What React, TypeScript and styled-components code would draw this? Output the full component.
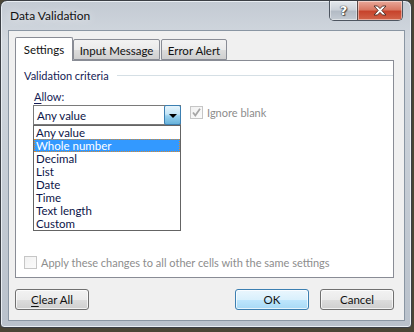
import styled, { createGlobalStyle } from "styled-components"

const GlobalStyle = createGlobalStyle`
    html, body {
        margin: 0;
        padding: 0;
        background: #4a4536;
    }
    * {
        box-sizing: border-box;
    }
`

const Window = styled.div`
    width: 412px;
    height: 328px;
    display: flex;
    flex-direction: column;
    border: 1px solid #3b3f45;
    border-radius: 7px 7px 4px 4px;
    background: linear-gradient(180deg, #c3cad3 0%, #d2d8df 12%, #c9d0d8 40%, #b9c1cb 100%);
    box-shadow: inset 0 0 0 1px #e8edf2;
    font-family: "Segoe UI", Lato, "Open Sans", sans-serif;
    font-size: 11px;
    color: #1a1a1a;
    overflow: hidden;
`

const TitleBar = styled.div`
    height: 29px;
    display: flex;
    align-items: flex-start;
    padding-left: 9px;
`

const Title = styled.span`
    margin-top: 7px;
    font-size: 12px;
    color: #111;
    text-shadow: 0 0 8px rgba(255, 255, 255, 0.9);
`

const CaptionButtons = styled.div`
    margin-left: auto;
    margin-right: 8px;
    display: flex;
    border: 1px solid #4d5560;
    border-top: none;
    border-radius: 0 0 5px 5px;
    overflow: hidden;
`

const CaptionButton = styled.div<{ $close?: boolean }>`
    width: ${p => (p.$close ? 45 : 27)}px;
    height: 19px;
    display: flex;
    align-items: center;
    justify-content: center;
    background: ${p =>
        p.$close
            ? "linear-gradient(180deg, #e9a99a 0%, #d97a65 45%, #c7432c 55%, #d2644a 100%)"
            : "linear-gradient(180deg, #e4e8ec 0%, #cdd3da 45%, #b3bbc5 55%, #c4cbd3 100%)"};
    border-left: ${p => (p.$close ? "1px solid #5a4a48" : "none")};
    box-shadow: inset 0 0 0 1px rgba(255, 255, 255, 0.45);
`

const HelpGlyph = styled.span`
    font-family: "DejaVu Sans", sans-serif;
    font-weight: bold;
    font-size: 13px;
    color: #fff;
    text-shadow: 0 0 1px #333, 0 0 1px #333, 1px 1px 1px #555;
`

const Client = styled.div`
    margin: 0 6px 0 7px;
    height: 291px;
    background: #f0f0f0;
    border: 1px solid #8a96a3;
    padding: 6px 10px 0 6px;
    display: flex;
    flex-direction: column;
`

const Tabs = styled.div`
    display: flex;
    align-items: flex-end;
    height: 23px;
    position: relative;
    z-index: 1;
`

const Tab = styled.div<{ $active?: boolean; $w: number }>`
    width: ${p => p.$w}px;
    height: ${p => (p.$active ? 24 : 21)}px;
    margin-bottom: ${p => (p.$active ? -1 : 0)}px;
    margin-right: ${p => (p.$active ? 0 : 1)}px;
    border: 1px solid #898c95;
    border-bottom: ${p => (p.$active ? "none" : "1px solid #898c95")};
    border-radius: 2px 2px 0 0;
    background: ${p => (p.$active ? "#fff" : "linear-gradient(180deg, #f2f2f2 0%, #ebebeb 50%, #dddddd 51%, #cfcfcf 100%)")};
    display: flex;
    align-items: center;
    justify-content: center;
    padding-top: ${p => (p.$active ? 0 : 1)}px;
    color: #111;
    font-size: 11.5px;
`

const Panel = styled.div`
    height: 218px;
    background: #fff;
    border: 1px solid #898c95;
    position: relative;
    display: flex;
    flex-direction: column;
    padding: 8px 0 8px 8px;
`

const GroupHeader = styled.div`
    display: flex;
    align-items: center;
    gap: 8px;
    color: #151c55;
`

const GroupLine = styled.div`
    flex: 1;
    height: 1px;
    background: #d5dfe5;
`

const FieldLabel = styled.div`
    margin: 7px 0 0 10px;
    color: #151c55;
    line-height: 15px;
`

const Accel = styled.span`
    text-decoration: underline;
    text-underline-offset: 2px;
`

const ComboRow = styled.div`
    margin: 1px 0 0 9px;
    display: flex;
    align-items: flex-start;
    gap: 9px;
    position: relative;
`

const ComboWrap = styled.div`
    position: relative;
`

const Combo = styled.div`
    width: 148px;
    height: 20px;
    border: 1px solid #7a7a7a;
    background: #fff;
    display: flex;
    align-items: center;
    padding-left: 3px;
    color: #0c1448;
    font-size: 11.5px;
`

const ComboText = styled.span`
    flex: 1;
`

const ArrowButton = styled.div`
    width: 17px;
    height: 20px;
    margin: -1px -1px -1px 0;
    border: 1px solid #3c7fb1;
    border-radius: 2px;
    background: linear-gradient(180deg, #e5f4fc 0%, #c4e5f6 45%, #98d1ef 55%, #68b3db 100%);
    display: flex;
    align-items: center;
    justify-content: center;
`

const Triangle = styled.div`
    width: 0;
    height: 0;
    border-left: 4px solid transparent;
    border-right: 4px solid transparent;
    border-top: 4px solid #000;
    margin-top: 1px;
`

const ListBox = styled.div`
    position: absolute;
    left: 0;
    top: 20px;
    width: 148px;
    border: 1px solid #646464;
    background: #fff;
    z-index: 2;
`

const ListItem = styled.div<{ $selected?: boolean }>`
    height: 13px;
    line-height: 13px;
    font-size: 11.5px;
    padding-left: 2px;
    color: ${p => (p.$selected ? "#fff" : "#0c1448")};
    background: ${p => (p.$selected ? "#3399ff" : "transparent")};
    outline: ${p => (p.$selected ? "1px dotted #d8892e" : "none")};
    outline-offset: -1px;
    white-space: nowrap;
`

const CheckRow = styled.label<{ $disabled?: boolean }>`
    display: flex;
    align-items: center;
    gap: 4px;
    color: ${p => (p.$disabled ? "#8d8d8d" : "#1a1a1a")};
`

const CheckBox = styled.div`
    width: 13px;
    height: 13px;
    border: 1px solid #c6c6c6;
    background: linear-gradient(135deg, #f1f1f1 0%, #fbfbfb 100%);
    display: flex;
    align-items: center;
    justify-content: center;
`

const IgnoreRow = styled(CheckRow)`
    margin-top: 1px;
`

const ApplyRow = styled(CheckRow)`
    margin-top: auto;
`

const ButtonRow = styled.div`
    display: flex;
    align-items: center;
    margin-top: 11px;
    gap: 11px;
`

const Button = styled.div<{ $default?: boolean }>`
    width: 74px;
    height: 21px;
    border: 1px solid ${p => (p.$default ? "#3c7fb1" : "#707070")};
    border-radius: 3px;
    background: ${p =>
        p.$default
            ? "linear-gradient(180deg, #eaf6fd 0%, #d9f0fc 50%, #bee6fd 51%, #a7d9f5 100%)"
            : "linear-gradient(180deg, #f2f2f2 0%, #ebebeb 50%, #dddddd 51%, #cfcfcf 100%)"};
    box-shadow: inset 0 0 0 1px rgba(255, 255, 255, 0.7);
    display: flex;
    align-items: center;
    justify-content: center;
    color: #111;
    font-size: 11.5px;
`

const Spacer = styled.div`
    flex: 1;
`

const options = ["Any value", "Whole number", "Decimal", "List", "Date", "Time", "Text length", "Custom"]

export default function App() {
    return (
        <>
            <GlobalStyle />
            <Window>
                <TitleBar>
                    <Title>Data Validation</Title>
                    <CaptionButtons>
                        <CaptionButton>
                            <HelpGlyph>?</HelpGlyph>
                        </CaptionButton>
                        <CaptionButton $close>
                            <svg width="14" height="11" viewBox="0 0 14 11">
                                <path
                                    d="M1 1 H4.5 L7 3.6 L9.5 1 H13 L8.8 5.5 L13 10 H9.5 L7 7.4 L4.5 10 H1 L5.2 5.5 Z"
                                    fill="#fff"
                                    stroke="#4a2a24"
                                    strokeWidth="0.9"
                                    strokeLinejoin="round"
                                />
                            </svg>
                        </CaptionButton>
                    </CaptionButtons>
                </TitleBar>
                <Client>
                    <Tabs>
                        <Tab $active $w={58}>Settings</Tab>
                        <Tab $w={87}>Input Message</Tab>
                        <Tab $w={66}>Error Alert</Tab>
                    </Tabs>
                    <Panel>
                        <GroupHeader>
                            Validation criteria
                            <GroupLine />
                        </GroupHeader>
                        <FieldLabel>
                            <Accel>A</Accel>llow:
                        </FieldLabel>
                        <ComboRow>
                            <ComboWrap>
                                <Combo>
                                    <ComboText>Any value</ComboText>
                                    <ArrowButton>
                                        <Triangle />
                                    </ArrowButton>
                                </Combo>
                                <ListBox>
                                    {options.map(o => (
                                        <ListItem key={o} $selected={o === "Whole number"}>
                                            {o}
                                        </ListItem>
                                    ))}
                                </ListBox>
                            </ComboWrap>
                            <IgnoreRow $disabled>
                                <CheckBox>
                                    <svg width="11" height="11" viewBox="0 0 11 11">
                                        <path d="M2 5.5 L4.3 8.5 L9 1.8" fill="none" stroke="#a6a6a6" strokeWidth="1.8" />
                                    </svg>
                                </CheckBox>
                                Ignore blank
                            </IgnoreRow>
                        </ComboRow>
                        <ApplyRow $disabled>
                            <CheckBox />
                            Apply these changes to all other cells with the same settings
                        </ApplyRow>
                    </Panel>
                    <ButtonRow>
                        <Button>
                            <span>
                                <Accel>C</Accel>lear All
                            </span>
                        </Button>
                        <Spacer />
                        <Button $default>OK</Button>
                        <Button>Cancel</Button>
                    </ButtonRow>
                </Client>
            </Window>
        </>
    )
}
